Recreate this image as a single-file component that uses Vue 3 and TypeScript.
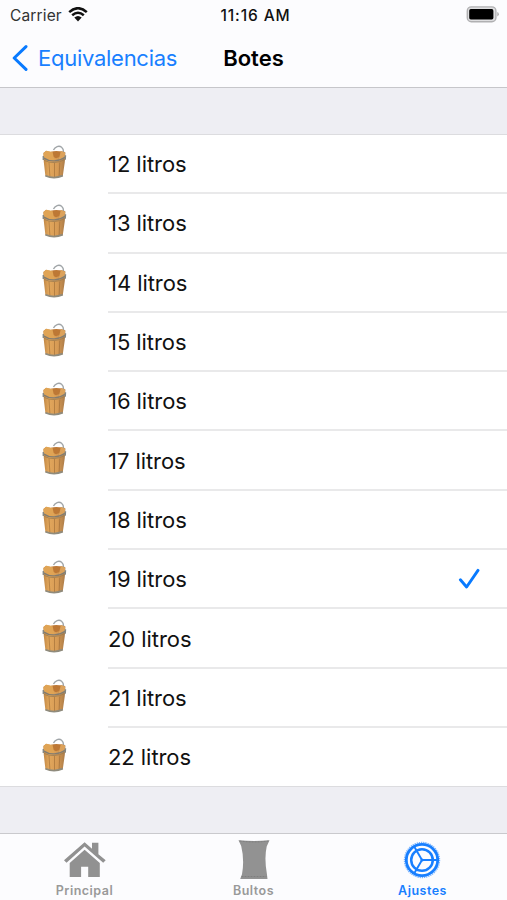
<script setup lang="ts">
import { ref } from 'vue'

const sizes: number[] = Array.from({ length: 11 }, (_, i) => 12 + i)
const selected = ref<number>(19)
</script>

<template>
  <div class="screen">
    <header class="header">
      <div class="status">
        <div class="carrier">
          <span>Carrier</span>
          <svg class="wifi" viewBox="0 0 20 15" width="20" height="15">
            <path d="M1.2 5.2Q10-2.8 18.8 5.2M4.2 8.3Q10 3.2 15.8 8.3" fill="none" stroke="#111" stroke-width="2.5" />
            <path d="M6.3 10.5Q10 7.3 13.7 10.5L10 14.4Z" fill="#111" />
          </svg>
        </div>
        <span class="time">11:16 AM</span>
        <svg class="battery" viewBox="0 0 34 18" width="34" height="18">
          <rect x="1.3" y="0.9" width="28.6" height="14.8" rx="4" fill="#dedee0" stroke="#b0b0b2" stroke-width="1.4" />
          <rect x="3.2" y="3.1" width="24.2" height="10.3" rx="1.6" fill="#000" />
          <path d="M31.3 6.1q1.5.6 1.5 2.2t-1.5 2.2z" fill="#aaa" />
        </svg>
      </div>
      <nav class="nav">
        <button class="back" type="button">
          <svg viewBox="0 0 16 26" width="16" height="26">
            <path d="M14 1.6 2.2 13 14 24.4" fill="none" stroke="#087aff" stroke-width="3" stroke-linecap="round" stroke-linejoin="round" />
          </svg>
          <span>Equivalencias</span>
        </button>
        <h1 class="title">Botes</h1>
      </nav>
    </header>

    <svg class="defs" width="0" height="0" aria-hidden="true">
      <defs>
        <linearGradient id="wood" x1="0" x2="1" y1="0" y2="0">
          <stop offset="0" stop-color="#c08644" />
          <stop offset=".25" stop-color="#e2a75c" />
          <stop offset=".65" stop-color="#d69a54" />
          <stop offset="1" stop-color="#a97a48" />
        </linearGradient>
        <symbol id="bucket" viewBox="0 0 25 34">
          <path d="M11.5 5C13 1.6 17 .3 19.6 2.2c1.8 1.4 2.1 3.6 1.9 6" fill="none" stroke="#a0a5a8" stroke-width="1.4" />
          <path d="M1.4 8 1.8 17 3.4 31Q12 34.6 20.8 31L22.8 17 23.4 7.4 20 6.2 12 8 4 5.8Z" fill="url(#wood)" />
          <path d="M9 6.8Q14 5.4 20.2 6.8L19 11.5 14 13.2 10.5 11.5Z" fill="#bd7835" />
          <path d="M1.6 8 4.4 5.8 10.6 7 12 13.6 12.3 15.8 1.8 14Z" fill="#e0a455" />
          <path d="M18.8 6.2 23.1 7.4 22.8 13.6 16.5 15.4Z" fill="#dca25b" />
          <path d="m7 17.5.9 14M12.5 17.8v14.6M17.8 17.5l-.7 14" fill="none" stroke="#9c6934" stroke-width=".8" opacity=".75" />
          <path d="M1.4 12.8q5 3.4 11 3.1T23.4 12" fill="none" stroke="#827c71" stroke-width="1.4" />
          <path d="M2 15.4q5 2.4 10.3 2.1T22.9 14.6" fill="none" stroke="#9b7b50" stroke-width=".8" />
          <path d="M3.4 30.7q8.6 3.8 17.4 0" fill="none" stroke="#8f8b7d" stroke-width="1.8" />
          <path d="M1.3 11v4M23.5 10.2l-.3 4.5" stroke="#858782" stroke-width="1.4" />
        </symbol>
      </defs>
    </svg>

    <main class="content">
      <ul class="list">
        <li v-for="size in sizes" :key="size" class="row" @click="selected = size">
          <svg class="bucket"><use href="#bucket" /></svg>
          <div class="cell">
            <span>{{ size }} litros</span>
            <svg v-if="selected === size" class="check" viewBox="0 0 22 22" width="22" height="22">
              <path d="m2.4 11.8 6.2 7.2L20 2.4" fill="none" stroke="#087aff" stroke-width="2.9" stroke-linecap="round" stroke-linejoin="round" />
            </svg>
          </div>
        </li>
      </ul>
    </main>

    <footer class="tabs">
      <div class="tab">
        <svg viewBox="0 0 44 38" width="44" height="38">
          <path d="M1 19.2 21.6 1.3l7.4 6.4V1.7h6.4v11.5l7.3 6-2.5 2.6L21.6 5.4 3.5 21.8Z" fill="#919191" />
          <path d="m21.6 8.7 15.2 13.4V36H25.2V25.7h-7.1V36H6.7V22.1Z" fill="#919191" />
        </svg>
        <span>Principal</span>
      </div>
      <div class="tab">
        <svg viewBox="0 0 34 42" width="34" height="42">
          <path d="M1.5 1.2q15.5 1.6 31 0l-2.8 6.2q-2.6 12 .2 27.6l.6 5H3.2l1.8-4.8Q7.6 21 4.2 7Z" fill="#929292" />
          <path d="M2.6 2q14.4 1.8 28.8 0M4.5 37.6h25" fill="none" stroke="#777" stroke-width=".8" stroke-dasharray="2 1" />
        </svg>
        <span>Bultos</span>
      </div>
      <div class="tab active">
        <svg class="wheel" viewBox="0 0 40 40" width="40" height="40">
          <g fill="none" stroke="#187fff">
            <circle cx="20" cy="20" r="17.6" stroke-width="1.2" stroke-dasharray="1.3 .9" opacity=".6" />
            <circle cx="20" cy="20" r="15.7" stroke-width="2.8" />
            <circle cx="20" cy="20" r="10.8" stroke-width="2.5" />
            <path d="M20 20h15M20 20 12.3 6.7M20 20l-7.7 13.3" stroke-width="1.9" />
          </g>
          <circle cx="20" cy="20" r="1.6" fill="#187fff" />
        </svg>
        <span>Ajustes</span>
      </div>
    </footer>
  </div>
</template>

<style>
body {
  margin: 0;
}
</style>

<style scoped>
.screen {
  box-sizing: border-box;
  width: 507px;
  height: 900px;
  display: flex;
  flex-direction: column;
  overflow: hidden;
  background: #eeeef3;
  font-family: Inter, "Liberation Sans", sans-serif;
  color: #111;
}
.header {
  box-sizing: border-box;
  height: 88px;
  background: #fcfcfe;
  border-bottom: 1px solid #c6c6ca;
}
.status {
  display: grid;
  grid-template-columns: 1fr auto 1fr;
  align-items: center;
  height: 30px;
  padding: 0 7px 0 10px;
  font-size: 15.5px;
}
.carrier {
  display: flex;
  align-items: center;
  gap: 6px;
  color: #333;
  letter-spacing: .15px;
}
.wifi {
  margin-top: -1px;
}
.time {
  font-weight: 500;
  font-size: 15.5px;
  letter-spacing: .9px;
  margin-right: -1px;
}
.battery {
  justify-self: end;
}
.nav {
  display: grid;
  grid-template-columns: 1fr auto 1fr;
  align-items: center;
  height: 56px;
  padding: 0 12px;
}
.back {
  display: flex;
  align-items: center;
  gap: 10px;
  padding: 0;
  border: 0;
  background: none;
  color: #187fff;
  font: inherit;
  font-size: 22px;
  letter-spacing: -.27px;
}
.back span {
  margin-top: -1px;
}
.title {
  margin: -1px 0 0;
  color: #000;
  font-size: 22px;
  font-weight: 600;
}
.defs {
  display: block;
}
.content {
  flex: 1;
  padding-top: 46px;
}
.list {
  box-sizing: border-box;
  height: 653px;
  display: grid;
  grid-template-rows: repeat(10, 59.3px) 1fr;
  margin: 0;
  padding: 0;
  list-style: none;
  background: #fff;
  border-top: 1px solid #dcdcdf;
  border-bottom: 1px solid #dcdcdf;
}
.row {
  display: flex;
  align-items: stretch;
  padding-left: 42px;
}
.bucket {
  width: 25px;
  height: 34px;
  margin: 10px 41px 0 0;
}
.cell {
  flex: 1;
  display: flex;
  align-items: center;
  justify-content: space-between;
  padding: 1px 27px 0 0;
  border-bottom: 2px solid #e9e9ea;
  font-size: 22px;
  letter-spacing: -.06px;
}
.row:last-child .cell {
  border-bottom: 0;
}
.tabs {
  box-sizing: border-box;
  height: 67px;
  display: grid;
  grid-template-columns: repeat(3, 1fr);
  background: #fcfcfe;
  border-top: 1px solid #c9c9cd;
}
.tab {
  display: grid;
  grid-template-rows: 52px 8px;
  place-items: center;
  align-content: start;
  color: #999;
  font-size: 12.5px;
  font-weight: 600;
  letter-spacing: .5px;
}
.wheel {
  margin-right: 1px;
}
.active {
  color: #187fff;
}
</style>
